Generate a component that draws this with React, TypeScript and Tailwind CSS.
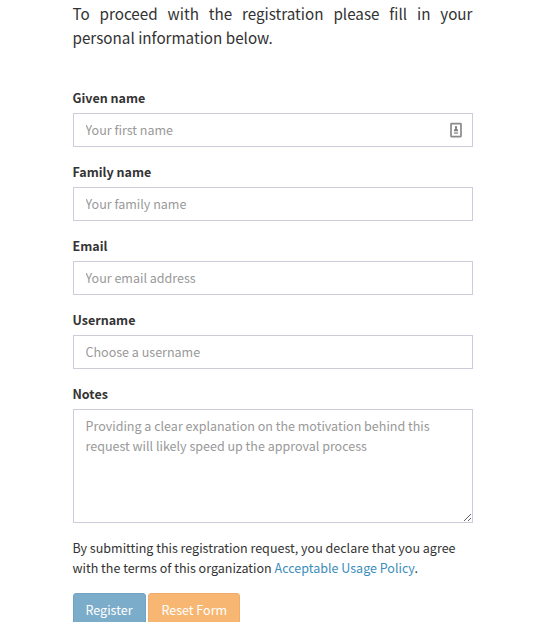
import React from "react";

type FieldProps = { id: string; label: string; placeholder: string; badge?: boolean };

function ContactIcon() {
  return (
    <svg
      className="pointer-events-none absolute right-[10.5px] top-[9px]"
      width="12"
      height="16"
      viewBox="0 0 12 16"
      fill="none"
    >
      <rect x="1" y="1.7" width="10" height="13" rx="0.6" stroke="#8a8a8a" strokeWidth="1.7" />
      <path d="M6 4c.8 0 1.1.6 1.1 1.3S6.9 6.4 6.8 6.7L8 7.7V9.2H4V7.7l1.200-1C5.1 6.400 4.900 6 4.900 5.300S5.200 4 6 4Z" fill="#808080" />
      <path d="M4 10.500h4M4 11.500h4" stroke="#b0b0b0" strokeWidth="1" />
    </svg>
  );
}

function Field({ id, label, placeholder, badge }: FieldProps) {
  return (
    <div className="mb-[15px]">
      <label htmlFor={id} className="mb-[5px] block font-bold">
        {label}
      </label>
      <div className="relative">
        <input
          id={id}
          type="text"
          placeholder={placeholder}
          className="block h-[34px] w-full border border-[#cccdd9] bg-white px-3 pt-[5px] pb-[7px] placeholder:text-[#999] focus:outline-none"
        />
        {badge && <ContactIcon />}
      </div>
    </div>
  );
}

export default function App() {
  return (
    <div className="h-[622px] overflow-hidden bg-white font-['Noto_Sans_CJK_SC',sans-serif] text-[12.53px] leading-5 text-[#333]">
      <form className="ml-[72.5px] w-[400px] pt-px">
        <p className="mb-[39px] text-justify text-[15.22px] leading-6">
          To proceed with the registration please fill in your personal information below.
        </p>
        <Field id="given" label="Given name" placeholder="Your first name" badge />
        <Field id="family" label="Family name" placeholder="Your family name" />
        <Field id="email" label="Email" placeholder="Your email address" />
        <Field id="username" label="Username" placeholder="Choose a username" />
        <div className="mb-[15px]">
          <label htmlFor="notes" className="mb-[5px] block font-bold">
            Notes
          </label>
          <textarea
            id="notes"
            placeholder="Providing a clear explanation on the motivation behind this request will likely speed up the approval process"
            className="block h-[114px] w-full border border-[#cccdd9] bg-white px-3 py-1.5 placeholder:text-[#999] focus:outline-none"
          />
        </div>
        <p className="mb-[15px]">
          By submitting this registration request, you declare that you agree with the terms of this organization{" "}
          <a href="#" className="text-[#3c8dbc]">
            Acceptable Usage Policy
          </a>
          .
        </p>
        <div className="flex gap-0.5">
          <button type="button" className="h-[34px] w-[73px] rounded-[3px] border border-[#72a3c2] bg-[#7bacca] text-white">
            Register
          </button>
          <button type="button" className="h-[34px] w-[92px] rounded-[3px] border border-[#f0ad6a] bg-[#f7b773] pl-[1.5px] text-white">
            Reset Form
          </button>
        </div>
      </form>
    </div>
  );
}
